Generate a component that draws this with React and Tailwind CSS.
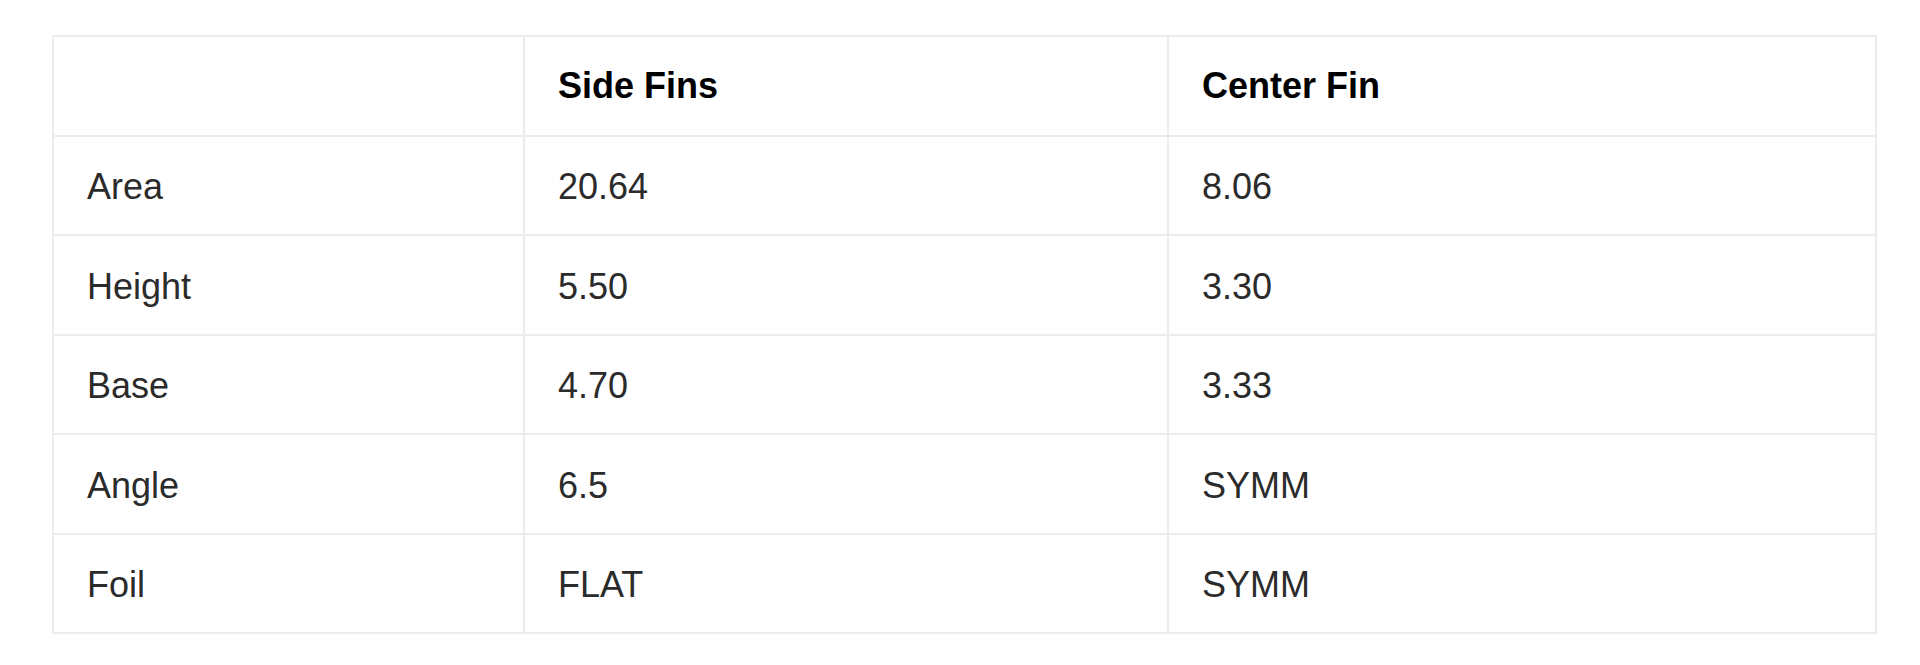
import React from "react";

const rows = [
  { label: "Area", side: "20.64", center: "8.06" },
  { label: "Height", side: "5.50", center: "3.30" },
  { label: "Base", side: "4.70", center: "3.33" },
  { label: "Angle", side: "6.5", center: "SYMM" },
  { label: "Foil", side: "FLAT", center: "SYMM" },
];

const cell = "border-2 border-[#ececec] h-[99.5px] pl-[33px] align-middle";

const App = () => {
  return (
    <div className="bg-white min-h-screen pt-[35px] pl-[52px] font-['Liberation_Sans',Arial,sans-serif]">
      <table className="table-fixed border-collapse w-[1823px] text-[36px] text-[#2b2b2b]">
        <colgroup>
          <col className="w-[471px]" />
          <col className="w-[644px]" />
          <col className="w-[708px]" />
        </colgroup>
        <thead>
          <tr>
            <th className={cell}></th>
            <th className={`${cell} text-left font-bold text-black`}>Side Fins</th>
            <th className={`${cell} text-left font-bold text-black`}>Center Fin</th>
          </tr>
        </thead>
        <tbody>
          {rows.map((row) => (
            <tr key={row.label}>
              <td className={`${cell} pt-[4px]`}>{row.label}</td>
              <td className={`${cell} pt-[4px]`}>{row.side}</td>
              <td className={`${cell} pt-[4px]`}>{row.center}</td>
            </tr>
          ))}
        </tbody>
      </table>
    </div>
  );
};

export default App;
